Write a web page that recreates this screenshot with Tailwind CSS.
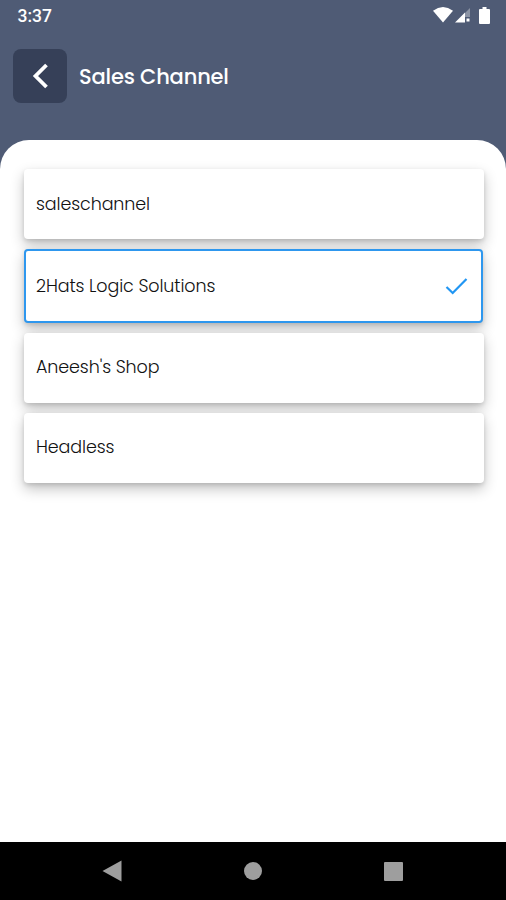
<!DOCTYPE html>
<html lang="en">
    <head>
        <meta charset="UTF-8" />
        <meta name="viewport" content="width=device-width, initial-scale=1.0" />
        <script src="https://cdn.jsdelivr.net/npm/@tailwindcss/browser@4"></script>
        <title>Sales Channel</title>
    </head>

    <body>
        <div
            class="w-full h-screen flex flex-col overflow-hidden bg-[#4f5b75] font-[Poppins,Inter,sans-serif]"
        >
            <!--status bar-->
            <div
                class="h-8 shrink-0 flex items-center justify-between pl-[17.5px] pr-4 text-white"
            >
                <span class="text-[17.500px] leading-8 font-medium font-[Roboto,sans-serif]">3:37</span>
                <div class="flex items-center -mt-[2px]">
                    <svg class="w-5 h-4" viewBox="0 0 20 16" fill="currentColor">
                        <path d="M0 3.7Q10-3.5 20 3.7L10 15.5z" />
                    </svg>
                    <svg class="w-4 h-4 ml-[2px]" viewBox="0 0 16 16" fill="currentColor">
                        <path d="M15 1v9H6z" opacity=".35" />
                        <path d="M0 15.500L10 5.500v10z" />
                        <path d="M11.500 11.500h3v3h-3z" />
                    </svg>
                    <svg class="w-[11px] h-[17px] ml-[8px]" viewBox="0 0 11 17" fill="currentColor">
                        <path d="M3.500 0h4v2H10q1 0 1 1v13q0 1-1 1H1q-1 0-1-1V3q0-1 1-1h2.500z" />
                    </svg>
                </div>
            </div>

            <!--header-->
            <div class="h-[108px] shrink-0 flex items-start pt-[17px] pl-[13px]">
                <button
                    class="w-[54px] h-[54px] rounded-lg bg-[#364058] flex items-center justify-center text-white"
                    aria-label="Back"
                >
                    <svg
                        class="w-6 h-[26px]"
                        viewBox="0 0 24 26"
                        fill="none"
                        stroke="currentColor"
                        stroke-width="3.800"
                    >
                        <path d="M18.500 2L7.500 13l11 11" />
                    </svg>
                </button>
                <h1
                    class="ml-3 h-[54px] leading-[55px] text-[21px] font-medium tracking-[-0.17px] text-white"
                >
                    Sales Channel
                </h1>
            </div>

            <!--channels-->
            <div class="flex-1 bg-white rounded-t-[29px] pt-[29px] pl-6 pr-[22px]">
                <ul
                    class="flex flex-col gap-[10px] text-[17.500px] font-light tracking-[-0.1px] text-[#111111]"
                >
                    <li
                        class="h-[70px] rounded-[4px] bg-white flex items-center px-[12px] shadow-[0_6px_14px_rgba(0,0,0,0.24),0_2px_4px_rgba(0,0,0,0.12)]"
                    >
                        saleschannel
                    </li>
                    <li
                        class="h-[74px] mr-[1px] rounded-[4px] border-2 border-[#2e97ee] bg-white flex items-center justify-between pl-[10px] pr-[13px] relative shadow-[0_6px_14px_rgba(0,0,0,0.24),0_2px_4px_rgba(0,0,0,0.12)]"
                    >
                        2Hats Logic Solutions
                        <svg
                            class="w-[23px] h-[18px]"
                            viewBox="0 0 23 18"
                            fill="none"
                            stroke="#2196f3"
                            stroke-width="2.200"
                        >
                            <path d="M1.500 10l6.200 6L21.500 2" />
                        </svg>
                    </li>
                    <li
                        class="h-[70px] rounded-[4px] bg-white flex items-center px-[12px] pb-[2px] relative shadow-[0_6px_14px_rgba(0,0,0,0.24),0_2px_4px_rgba(0,0,0,0.12)]"
                    >
                        Aneesh's Shop
                    </li>
                    <li
                        class="h-[70px] rounded-[4px] bg-white flex items-center px-[12px] pb-[2px] relative shadow-[0_6px_14px_rgba(0,0,0,0.24),0_2px_4px_rgba(0,0,0,0.12)]"
                    >
                        Headless
                    </li>
                </ul>
            </div>

            <!--navigation bar-->
            <div
                class="h-[58px] shrink-0 bg-black flex items-center justify-between pl-[102px] pr-[103px] text-[#9e9e9e]"
            >
                <svg class="w-5 h-[22px]" viewBox="0 0 20 22" fill="currentColor">
                    <path d="M0.500 11L19.500 0.500v21z" />
                </svg>
                <div class="w-[18px] h-[18px] rounded-full bg-[#9e9e9e]"></div>
                <div class="w-[19px] h-[19px] rounded-[1px] bg-[#9e9e9e]"></div>
            </div>
        </div>
    </body>
</html>
